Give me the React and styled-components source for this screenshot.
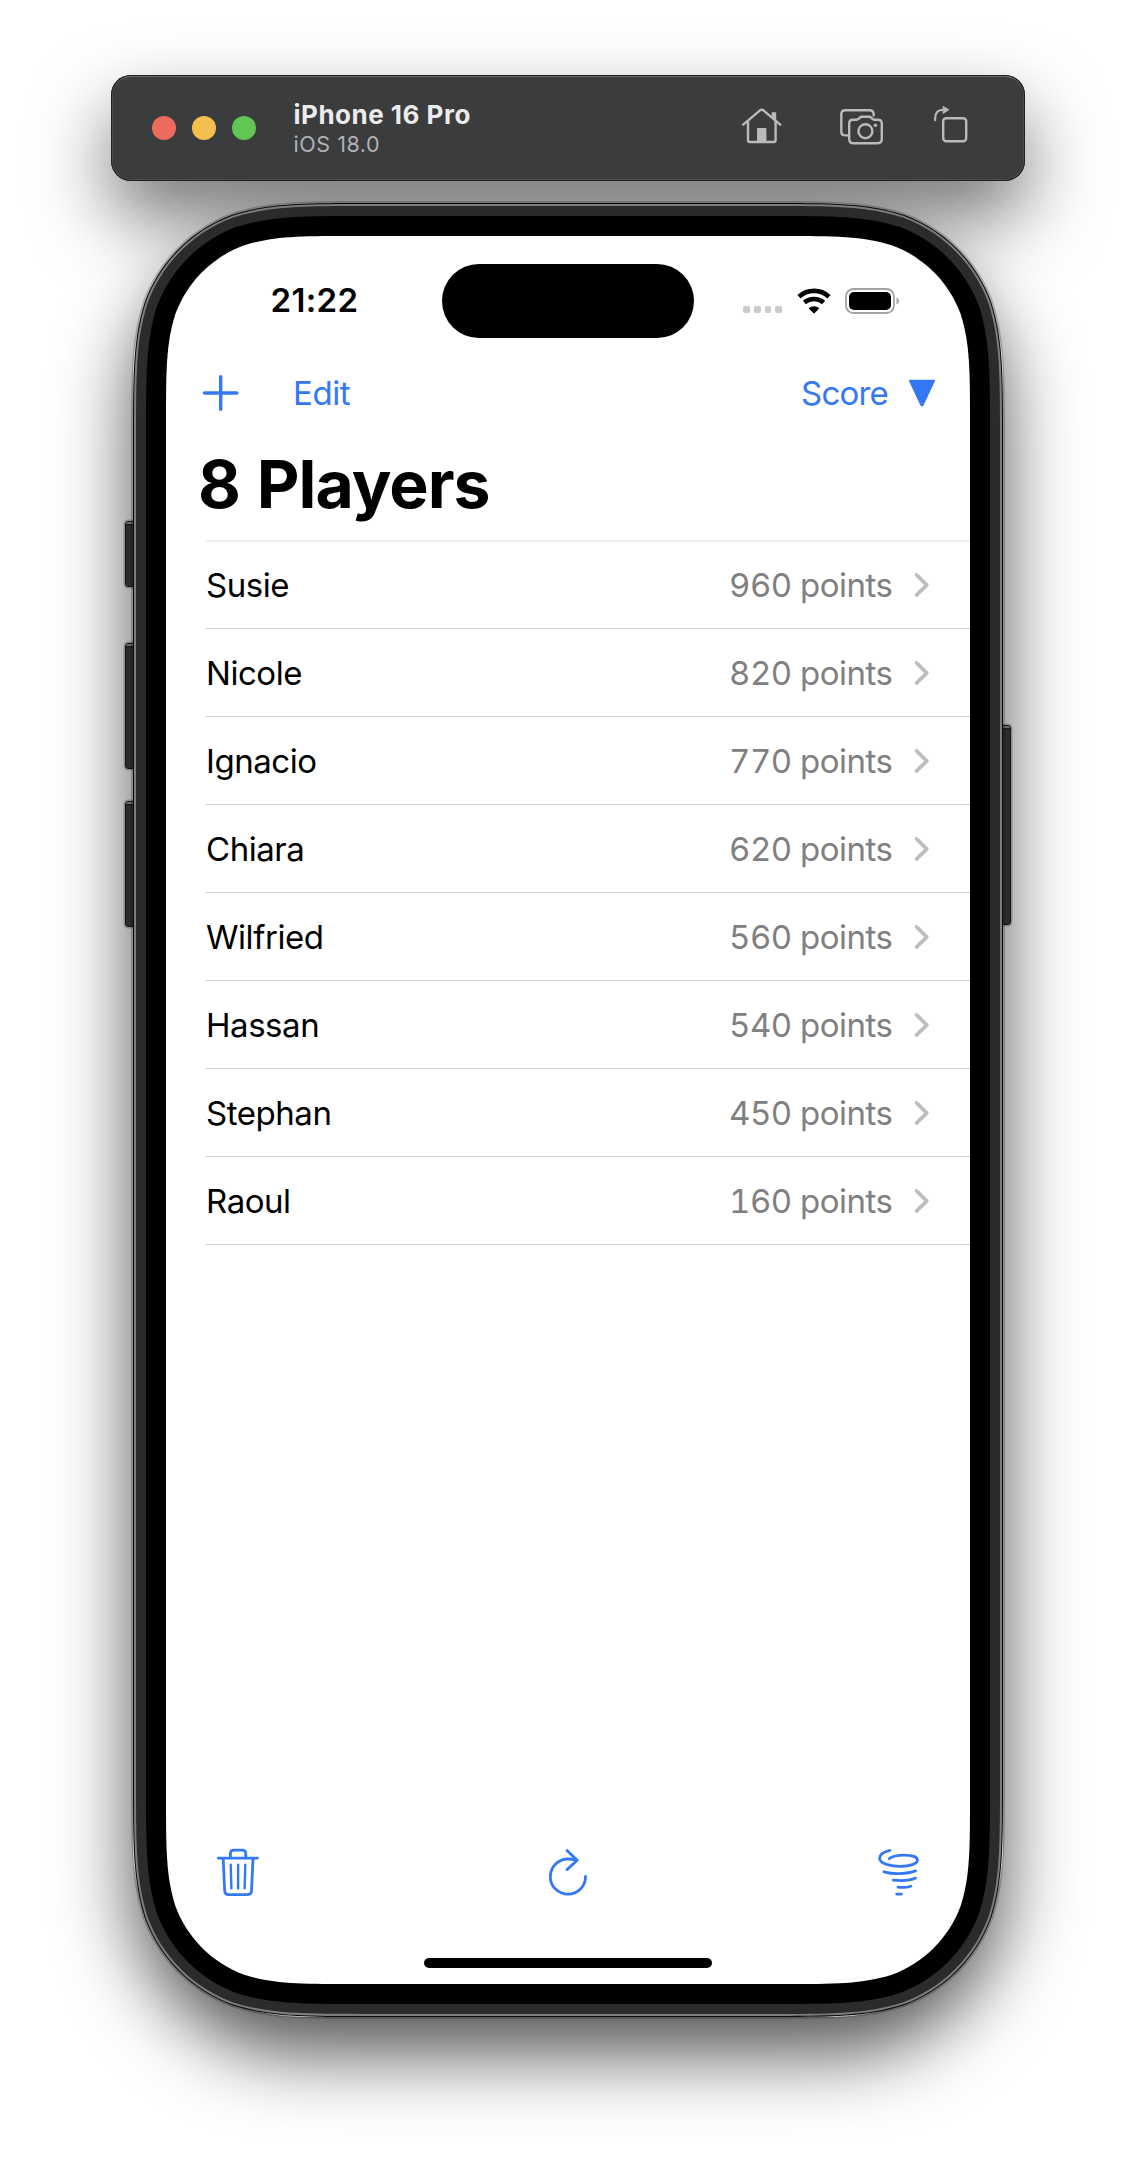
import React from 'react';
import styled, { createGlobalStyle } from 'styled-components';

const BLUE = '#3478f6';

/* Rounded rectangle with continuous ("squircle") corners. */
function continuousRect(w, h, r) {
  const a = 1.52866 * r;
  const b = 1.08849 * r;
  const c = 0.86841 * r;
  const d = 0.63149 * r;
  const e = 0.37282 * r;
  const f = 0.16906 * r;
  const g = 0.07491 * r;
  return [
    `M${a} 0`,
    `L${w - a} 0`,
    `C${w - b} 0 ${w - c} 0 ${w - d} ${g}`,
    `C${w - e} ${f} ${w - f} ${e} ${w - g} ${d}`,
    `C${w} ${c} ${w} ${b} ${w} ${a}`,
    `L${w} ${h - a}`,
    `C${w} ${h - b} ${w} ${h - c} ${w - g} ${h - d}`,
    `C${w - f} ${h - e} ${w - e} ${h - f} ${w - d} ${h - g}`,
    `C${w - c} ${h} ${w - b} ${h} ${w - a} ${h}`,
    `L${a} ${h}`,
    `C${b} ${h} ${c} ${h} ${d} ${h - g}`,
    `C${e} ${h - f} ${f} ${h - e} ${g} ${h - d}`,
    `C0 ${h - c} 0 ${h - b} 0 ${h - a}`,
    `L0 ${a}`,
    `C0 ${b} 0 ${c} ${g} ${d}`,
    `C${f} ${e} ${e} ${f} ${d} ${g}`,
    `C${c} 0 ${b} 0 ${a} 0`,
    'Z',
  ].join(' ');
}

const GlobalStyle = createGlobalStyle`
  * { box-sizing: border-box; }
  body {
    margin: 0;
    background: #fff;
    font-family: Inter, Roboto, "Liberation Sans", sans-serif;
    -webkit-font-smoothing: antialiased;
  }
`;

const Stage = styled.div`
  width: 1136px;
  height: 2168px;
  padding-top: 75px;
  display: flex;
  flex-direction: column;
  align-items: center;
  isolation: isolate;
  overflow: hidden;
  background: #fff;
`;

/* ---------- Simulator title bar ---------- */

const TitleBar = styled.header`
  position: relative;
  flex: none;
  width: 914px;
  height: 106px;
  padding: 2px 57px 0 41px;
  display: flex;
  align-items: center;
  border-radius: 20px;
  background: #3b3c3e;
  box-shadow: inset 0 0 0 1px #202122, inset 0 3px 1px -1px #6b6c6d,
    inset 0 0 0 2px rgba(255, 255, 255, 0.08);

  &::before {
    content: '';
    position: absolute;
    inset: 0;
    z-index: -1;
    border-radius: 20px;
    box-shadow: 0 36px 76px rgba(0, 0, 0, 0.54);
  }
`;

const Lights = styled.div`
  display: flex;
  gap: 16px;
  margin-top: -2px;
`;

const Light = styled.span`
  width: 24px;
  height: 24px;
  border-radius: 50%;
  background: ${(p) => p.$color};
`;

const DeviceInfo = styled.div`
  flex: 1;
  margin-left: 37.5px;
  display: flex;
  flex-direction: column;
`;

const DeviceName = styled.strong`
  font-size: 26px;
  line-height: 30px;
  font-weight: 700;
  letter-spacing: 0.5px;
  color: #ececec;
`;

const DeviceOS = styled.span`
  font-size: 21.5px;
  line-height: 29px;
  letter-spacing: 0.55px;
  color: #b0b1b3;
`;

const Actions = styled.div`
  display: flex;
  margin-top: -2px;

  svg {
    display: block;
    fill: none;
    stroke: #b9babc;
    stroke-width: 2.4;
    stroke-linecap: round;
    stroke-linejoin: round;
  }
  svg + svg { margin-left: 58px; }
  svg:last-child { margin-left: 50px; }
`;

/* ---------- Phone body ---------- */

const Phone = styled.div`
  position: relative;
  flex: none;
  margin-top: 20px;

  &::before {
    content: '';
    position: absolute;
    inset: 2px;
    z-index: -1;
    border-radius: 168px;
    box-shadow: 0 36px 76px rgba(0, 0, 0, 0.68);
  }
`;

const Shell = styled.div`
  position: relative;
  width: ${(p) => p.$w}px;
  height: ${(p) => p.$h}px;
  padding: ${(p) => p.$pad}px;
  background: ${(p) => p.$fill};
  clip-path: path('${(p) => continuousRect(p.$w, p.$h, p.$r)}');
`;

const SideButton = styled.span`
  position: absolute;
  top: ${(p) => p.$top}px;
  ${(p) => p.$side}: -6px;
  width: 9px;
  height: ${(p) => p.$length}px;
  border: 1px solid #151515;
  border-radius: ${(p) => (p.$side === 'left' ? '3px 0 0 3px' : '0 3px 3px 0')};
  background: linear-gradient(#6a6a6a 0 2px, #1c1c1c 2px 3px, #2b2b2b 4px);
  box-shadow: 0 0 0 1.5px rgba(0, 0, 0, 0.22);
`;

const Screen = styled.main`
  width: 804px;
  height: 1748px;
  display: flex;
  flex-direction: column;
  background: #fff;
  clip-path: path('${continuousRect(804, 1748, 124)}');
`;

/* ---------- Status bar ---------- */

const StatusBar = styled.div`
  flex: none;
  height: 102px;
  padding-top: 28px;
  display: grid;
  grid-template-columns: 276px 252px 276px;
  align-items: center;
`;

const Clock = styled.time`
  padding: 0 0 2px 104.5px;
  font-size: 33px;
  font-weight: 600;
  letter-spacing: 0.35px;
  line-height: 40px;
  color: #000;
`;

const Island = styled.div`
  height: 74px;
  border-radius: 37px;
  background: #000;
`;

const Indicators = styled.div`
  display: flex;
  align-items: center;
  justify-content: flex-end;
  padding: 0 70px 1px 0;
`;

const Signal = styled.div`
  display: flex;
  gap: 4px;
  margin: 17px 15px 0 0;

  i {
    width: 6.7px;
    height: 7px;
    border-radius: 2px;
    background: #cbcbcb;
  }
`;

const Wifi = styled.svg`
  margin-right: 14px;
  display: block;
`;

/* ---------- Navigation ---------- */

const NavBar = styled.nav`
  flex: none;
  height: 110px;
  padding: 0 34px 0 36px;
  display: flex;
  align-items: center;
  color: ${BLUE};
`;

const NavText = styled.span`
  font-size: 33px;
  line-height: 40px;
  letter-spacing: ${(p) => p.$tracking}px;
  margin-left: ${(p) => p.$before};
  margin-right: ${(p) => p.$after};
`;

const Title = styled.h1`
  flex: none;
  margin: 0 0 19px;
  padding-left: 32px;
  font-size: 66px;
  line-height: 73px;
  font-weight: 700;
  letter-spacing: -0.95px;
  word-spacing: 2px;
  color: #000;
`;

/* ---------- Player list ---------- */

const List = styled.ul`
  flex: 1;
  margin: 0 0 0 40px;
  padding: 0;
  list-style: none;
  border-top: 2px solid #ededed;
`;

const Row = styled.li`
  height: 88px;
  padding: 1px 40px 0 0;
  display: flex;
  align-items: center;
  border-bottom: 1px solid #d0d0d2;
  font-size: 33px;

  &:first-child {
    height: 87px;
    padding-top: 0;
  }
`;

const PlayerName = styled.span`
  flex: 1;
  letter-spacing: -0.45px;
  color: #000;
`;

const Points = styled.span`
  margin-right: 20.5px;
  letter-spacing: -0.5px;
  font-variant-numeric: tabular-nums;
  color: #808080;
`;

/* ---------- Bottom bar ---------- */

const BottomBar = styled.footer`
  flex: none;
  height: 48px;
  margin-bottom: 62px;
  padding: 0 50px 0 51px;
  display: grid;
  grid-template-columns: 1fr auto 1fr;

  svg {
    display: block;
    fill: none;
    stroke: ${BLUE};
    stroke-width: 2.8;
    stroke-linecap: round;
    stroke-linejoin: round;
  }
  svg:last-child { justify-self: end; }
`;

const HomeIndicator = styled.div`
  flex: none;
  align-self: center;
  width: 288px;
  height: 10px;
  margin-bottom: 16px;
  border-radius: 5px;
  background: #000;
`;

/* ---------- Icons ---------- */

const HomeIcon = () => (
  <svg width="40" height="46" viewBox="742 105 40 46">
    <path d="M743.2 124.6 760 110.3Q761.7 109 763.4 110.3L780.2 124.6" />
    <path d="M748 121.5V140Q748 142 750 142H773.4Q775.6 142 775.6 140V121.5" />
    <path d="M772.4 117.5V113H775.4V120Z" fill="#b9babc" strokeWidth="1.6" />
    <path d="M758 142V129H765.4V142Z" fill="#b9babc" strokeWidth="2" />
  </svg>
);

const CameraIcon = () => (
  <svg width="44" height="46" viewBox="840 105 44 46">
    <path d="M847.2 135.4H845.4Q841.3 135.4 841.3 131.4V114.3Q841.3 110.3 845.4 110.3H869.6Q873.4 110.3 873.7 114.2V115.6" />
    <path d="M853 119.7H856.6Q858 119.7 858.9 118.6L859.8 117.6Q860.6 116.7 862 116.7H869Q870.4 116.7 871.2 117.6L872.1 118.6Q873 119.7 874.4 119.7H877.8Q881.8 119.7 881.8 123.6V139.3Q881.8 143.2 877.8 143.2H853Q849.2 143.2 849.2 139.3V123.6Q849.2 119.7 853 119.7Z" />
    <circle cx="865.4" cy="131.2" r="7" />
    <circle cx="875.4" cy="125.3" r="1.7" fill="#b9babc" stroke="none" />
  </svg>
);

const RotateIcon = () => (
  <svg width="34" height="46" viewBox="934 105 34 46">
    <rect x="943.2" y="118.2" width="23" height="23" rx="3" />
    <path d="M935.2 120.2V118.3C935.2 112.8 938 109.9 943 109.8" strokeWidth="2.1" />
    <path d="M943.4 106.6 948.8 109.8 943.4 113.2Z" fill="#b9babc" strokeWidth="1" />
  </svg>
);

const WifiIcon = () => (
  <Wifi width="34" height="26" viewBox="0 0 34 26">
    <g fill="none" stroke="#000" strokeWidth="4.6">
      <path d="M2 8.7C10.4 0.9 23.6 0.9 32 8.7" />
      <path d="M7.4 14.6C12.9 9.8 21.1 9.8 26.6 14.6" />
    </g>
    <path d="M11.6 20.3C14.7 17.5 19.3 17.5 22.4 20.3L17.7 25Q17 25.6 16.3 25Z" />
  </Wifi>
);

const BatteryIcon = () => (
  <svg width="55" height="26" viewBox="0 0 55 26">
    <rect x="1" y="1" width="48" height="24" rx="7.5" fill="none" stroke="#a3a3a3" strokeWidth="1.8" />
    <rect x="4" y="4" width="42" height="18" rx="5" />
    <path d="M51.5 9.2Q54 10.2 54 13T51.5 16.8Z" fill="#a3a3a3" />
  </svg>
);

const PlusIcon = () => (
  <svg width="37" height="36" viewBox="0 0 37 36">
    <path d="M18.7 1.8V34.2M2.5 18H34.9" stroke={BLUE} strokeWidth="3.4" strokeLinecap="round" />
  </svg>
);

const TriangleIcon = () => (
  <svg width="28" height="28" viewBox="0 0 28 28">
    <path d="M2 1.8H26L14.6 26Q14 27 13.4 26Z" fill={BLUE} stroke={BLUE} strokeWidth="2" strokeLinejoin="round" />
  </svg>
);

const ChevronIcon = () => (
  <svg width="17" height="26" viewBox="0 0 17 26">
    <path d="M3.6 3 13.8 13 3.6 23" fill="none" stroke="#bdbdbf" strokeWidth="3.8" strokeLinecap="round" strokeLinejoin="round" />
  </svg>
);

const TrashIcon = () => (
  <svg width="42" height="48" viewBox="0 0 42 48">
    <path d="M1.4 10.2H40.4M13.4 10V5.6Q13.4 2.2 16.8 2.2H25.4Q28.8 2.2 28.8 5.6V10" />
    <path d="M6.2 10.8 7.7 43Q7.9 46.6 11.4 46.6H30.8Q34.3 46.6 34.5 43L36 10.8" />
    <path d="M13.7 16.6 14.4 40.4M21.1 16.6V40.4M28.3 16.6 27.6 40.4" strokeWidth="2.4" />
  </svg>
);

const ReloadIcon = () => (
  <svg width="39" height="48" viewBox="0 0 39 48">
    <path d="M36.5 28.4A17.6 17.6 0 1 1 18.9 11Q23 11 27.6 12.2" />
    <path d="M18 2.4 28.2 12.2 18 21.6" />
  </svg>
);

const TornadoIcon = () => (
  <svg width="42" height="48" viewBox="0 0 42 48" strokeWidth="2.6">
    <path d="M11.8 2.4C5.6 4 1.6 6.9 1.6 10.3C1.6 15 10.5 18.3 21.5 18.3C32 18.3 39.4 15.8 39.4 12.2C39.4 9 33.6 7.2 26 7.2C20 7.2 14.4 8.4 11.3 10.6" />
    <path d="M6 23.8C14 26.4 29 26.2 37.6 22.9" />
    <path d="M15.3 32.2C23 33 32 32.7 37.6 30.1" />
    <path d="M20 39.2C24.8 39.7 29.4 39.4 32.8 38.2" />
    <path d="M18.6 46.1H23.4" />
  </svg>
);

/* ---------- Data ---------- */

const players = [
  { name: 'Susie', score: 960 },
  { name: 'Nicole', score: 820 },
  { name: 'Ignacio', score: 770 },
  { name: 'Chiara', score: 620 },
  { name: 'Wilfried', score: 560 },
  { name: 'Hassan', score: 540 },
  { name: 'Stephan', score: 450 },
  { name: 'Raoul', score: 160 },
];

export default function App() {
  return (
    <>
      <GlobalStyle />
      <Stage>
        <TitleBar>
          <Lights>
            <Light $color="#ed6a5e" />
            <Light $color="#f5bf4f" />
            <Light $color="#62c655" />
          </Lights>
          <DeviceInfo>
            <DeviceName>iPhone 16 Pro</DeviceName>
            <DeviceOS>iOS 18.0</DeviceOS>
          </DeviceInfo>
          <Actions>
            <HomeIcon />
            <CameraIcon />
            <RotateIcon />
          </Actions>
        </TitleBar>

        <Phone>
          <SideButton $side="left" $top={320} $length={66} />
          <SideButton $side="left" $top={442} $length={126} />
          <SideButton $side="left" $top={600} $length={126} />
          <SideButton $side="right" $top={524} $length={200} />
          <Shell $w={874} $h={1818} $r={159} $pad={2} $fill="rgba(0, 0, 0, 0.2)">
            <Shell $w={870} $h={1814} $r={157} $pad={1} $fill="#0a0a0a">
              <Shell $w={868} $h={1812} $r={156} $pad={2} $fill="#7d7d7d">
                <Shell $w={864} $h={1808} $r={154} $pad={10} $fill="#2b2b2b">
                  <Shell $w={844} $h={1788} $r={144} $pad={20} $fill="#000">
                    <Screen>
                      <StatusBar>
                        <Clock>21:22</Clock>
                        <Island />
                        <Indicators>
                          <Signal>
                            <i />
                            <i />
                            <i />
                            <i />
                          </Signal>
                          <WifiIcon />
                          <BatteryIcon />
                        </Indicators>
                      </StatusBar>
                      <NavBar>
                        <PlusIcon />
                        <NavText $tracking={-0.4} $before="54px" $after="0">
                          Edit
                        </NavText>
                        <NavText $tracking={-0.8} $before="auto" $after="20px">
                          Score
                        </NavText>
                        <TriangleIcon />
                      </NavBar>
                      <Title>8 Players</Title>
                      <List>
                        {players.map((player) => (
                          <Row key={player.name}>
                            <PlayerName>{player.name}</PlayerName>
                            <Points>{player.score} points</Points>
                            <ChevronIcon />
                          </Row>
                        ))}
                      </List>
                      <BottomBar>
                        <TrashIcon />
                        <ReloadIcon />
                        <TornadoIcon />
                      </BottomBar>
                      <HomeIndicator />
                    </Screen>
                  </Shell>
                </Shell>
              </Shell>
            </Shell>
          </Shell>
        </Phone>
      </Stage>
    </>
  );
}
